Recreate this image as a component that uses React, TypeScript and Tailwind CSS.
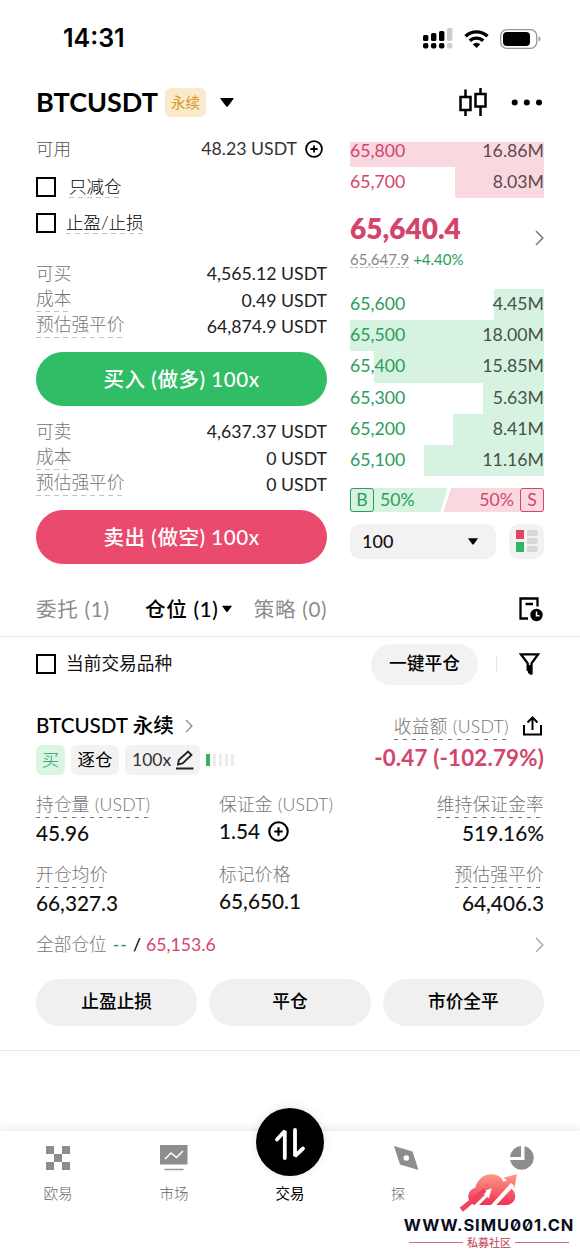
import React from "react";

type Kids = { children: React.ReactNode };

const Dash = ({ dark }: { dark?: boolean }) => (
  <span
    className={
      dark
        ? "block h-px w-full bg-[repeating-linear-gradient(90deg,#777_0_4px,transparent_4px_9px)]"
        : "block h-px w-full bg-[repeating-linear-gradient(90deg,#c4c4c4_0_5px,transparent_5px_9px)]"
    }
  />
);

const Check = () => <span className="block size-5 shrink-0 border-2 border-black" />;

const Plus = ({ size }: { size: number }) => (
  <svg width={size} height={size} viewBox="0 0 20 20" fill="none" stroke="#000" strokeWidth="2">
    <circle cx="10" cy="10" r="8.8" />
    <path d="M10 6v8M6 10h8" />
  </svg>
);

const Chevron = ({ color, className }: { color: string; className?: string }) => (
  <svg className={className} width="9" height="16" viewBox="0 0 9 16" fill="none" stroke={color} strokeWidth="1.5">
    <path d="M1 1l6.8 7L1 15" />
  </svg>
);

const Caret = ({ w, h }: { w: number; h: number }) => (
  <svg width={w} height={h} viewBox="0 0 14 9">
    <path d="M1 0h12q1.2 0 .4 1L8 8.300q-1 1-2 0L.6 1Q-.2 0 1 0z" />
  </svg>
);

const Row = ({ label, value, dashed }: { label: string; value: string; dashed?: boolean }) => (
  <div className="flex h-[26.7px] items-center justify-between">
    <div className={dashed ? "-mt-[3px] text-[17.700px] leading-[21px] font-light text-[#757575]" : "-mt-px text-[17.700px] leading-[21px] font-light text-[#757575]"}>
      {label}
      {dashed && (
        <div className="pt-[2px]">
          <Dash />
        </div>
      )}
    </div>
    <div className="-mt-px text-[17.700px] leading-5 text-[#222]">{value}</div>
  </div>
);

const bids = [
  { p: "65,600", v: "4.45M", w: 50 },
  { p: "65,500", v: "18.00M", w: 194 },
  { p: "65,400", v: "15.85M", w: 170 },
  { p: "65,300", v: "5.63M", w: 61 },
  { p: "65,200", v: "8.41M", w: 91 },
  { p: "65,100", v: "11.16M", w: 120 },
];

const Level = ({ p, v, w, side, first }: { p: string; v: string; w: number; side: "ask" | "bid"; first?: boolean }) => (
  <div className={first ? "grid h-[25px] grid-cols-1 grid-rows-1" : "grid h-[31.15px] grid-cols-1 grid-rows-1"}>
    <div
      className={side === "ask" ? "col-start-1 row-start-1 justify-self-end bg-[#fad8e0]" : "col-start-1 row-start-1 justify-self-end bg-[#d6f2e0]"}
      style={{ width: w }}
    />
    <div className={first ? "col-start-1 row-start-1 flex items-start justify-between text-[17.700px] leading-[18px]" : "col-start-1 row-start-1 flex items-center justify-between pb-px text-[17.700px]"}>
      <span className={side === "ask" ? "text-[#d3456b]" : "text-[#2c9d59]"}>{p}</span>
      <span className={side === "ask" ? "text-[#5b4a50]" : "text-[#46524b]"}>{v}</span>
    </div>
  </div>
);

const StatusBar = () => (
  <div className="flex h-[77px] items-center justify-between pr-[39px] pl-[63px]">
    <span className="font-['Inter'] text-[25px] font-semibold">14:31</span>
    <div className="flex items-center gap-[11px]">
      <svg width="30" height="21" viewBox="0 0 30 21">
        <rect x="0" y="7" width="5.400" height="6" rx="1.5" />
        <rect x="8" y="5" width="5.400" height="8" rx="1.5" />
        <rect x="16" y="3" width="5.400" height="10" rx="1.5" />
        <rect x="24" y="0" width="5.400" height="13" rx="1.5" fill="#ccc" />
        <rect x="0" y="15" width="5.400" height="5.600" rx="2" />
        <rect x="8" y="15" width="5.400" height="5.600" rx="2" />
        <rect x="16" y="15" width="5.400" height="5.600" rx="2" />
        <rect x="24" y="15" width="5.400" height="5.600" rx="2" fill="#ccc" />
      </svg>
      <svg width="25" height="19" viewBox="0 0 25 19" fill="none" stroke="#000" strokeWidth="3.400">
        <path d="M1.500 7.300a15.800 15.800 0 0 1 22 0" />
        <path d="M5.800 11.800a9.600 9.600 0 0 1 13.400 0" />
        <path d="M8.700 15.200a5.500 5.500 0 0 1 7.600 0L12.500 19z" fill="#000" stroke="none" />
      </svg>
      <svg width="41" height="20" viewBox="0 0 41 20">
        <rect x=".7" y=".7" width="36" height="18.600" rx="6" fill="none" stroke="#999" strokeWidth="1.300" />
        <rect x="3" y="3" width="27" height="14" rx="4" />
        <path d="M38.500 7.500q2 .8 2 2.500t-2 2.500z" fill="#999" />
      </svg>
    </div>
  </div>
);

const Header = () => (
  <div className="flex h-[51px] items-center pr-[37px] pl-9">
    <span className="text-[27px] font-bold">BTCUSDT</span>
    <span className="ml-[7px] flex h-[29px] w-[41px] items-center justify-center rounded-md bg-[#fbe9cb] text-[14.500px] text-[#cf9a2c]">永续</span>
    <span className="ml-[14px]">
      <Caret w={14} h={9} />
    </span>
    <svg className="ml-auto" width="28" height="29" viewBox="0 0 28 29" fill="none" stroke="#000" strokeWidth="2.500">
      <path d="M6.500 1.500v7.500M6.500 22v6M1.500 9h10v13h-10zM21.500 0v6M21.500 18.500V28M16.500 6h10v12.500h-10z" />
    </svg>
    <svg className="ml-6" width="32" height="7" viewBox="0 0 32 7">
      <circle cx="3.700" cy="3.500" r="3" />
      <circle cx="15.800" cy="3.500" r="3" />
      <circle cx="28" cy="3.500" r="3" />
    </svg>
  </div>
);

const OrderForm = () => (
  <div className="w-[291px]">
    <div className="flex h-[14px] items-center justify-between">
      <span className="text-[17.500px] leading-5 font-light text-[#555]">可用</span>
      <div className="flex items-center gap-[8px]">
        <span className="text-[17.700px] leading-5 text-[#333]">48.23 USDT</span>
        <span className="mr-1">
          <Plus size={18} />
        </span>
      </div>
    </div>
    <div className="mt-[17px] flex h-7 items-center gap-[13px]">
      <Check />
      <span className="text-[17.500px] leading-[21px] font-light">
        只减仓
        <Dash />
      </span>
    </div>
    <div className="mt-2 flex h-7 items-center gap-[10px]">
      <Check />
      <span className="text-[17.500px] leading-[21px] font-light">
        止盈/止损
        <Dash />
      </span>
    </div>
    <div className="mt-[24px]">
      <Row label="可买" value="4,565.12 USDT" />
      <Row label="成本" value="0.49 USDT" dashed />
      <Row label="预估强平价" value="64,874.9 USDT" dashed />
    </div>
    <button className="mt-[11px] block h-[54px] w-full rounded-full bg-[#31bd65] text-[20.600px] font-medium tracking-[0.500px] text-white">买入 (做多) 100x</button>
    <div className="mt-[13px]">
      <Row label="可卖" value="4,637.37 USDT" />
      <Row label="成本" value="0 USDT" dashed />
      <Row label="预估强平价" value="0 USDT" dashed />
    </div>
    <button className="mt-[11px] block h-[54px] w-full rounded-full bg-[#ea4a6d] text-[20.600px] font-medium tracking-[0.500px] text-white">卖出 (做空) 100x</button>
  </div>
);

const OrderBook = () => (
  <div className="w-[194px]">
    <Level p="65,800" v="16.86M" w={194} side="ask" first />
    <Level p="65,700" v="8.03M" w={89} side="ask" />
    <div className="flex h-[91px] items-start justify-between">
      <div className="pt-[13px]">
        <div className="text-[28px] leading-[34px] font-extrabold text-[#d3456b]">65,640.4</div>
        <div className="mt-[3px] flex h-[22px] items-center gap-1 text-[15px]">
          <span className="text-[#888] underline decoration-[#bbb] decoration-dashed decoration-1 underline-offset-2">65,647.9</span>
          <span className="text-[#2c9d59]">+4.40%</span>
        </div>
      </div>
      <Chevron color="#777" className="mt-8" />
    </div>
    {bids.map((b) => (
      <Level key={b.p} {...b} side="bid" />
    ))}
    <div className="mt-3 grid h-6 grid-cols-1 grid-rows-1">
      <svg className="col-start-1 row-start-1" width="194" height="24" viewBox="0 0 194 24">
        <path d="M0 0h97.500L90.500 24H0z" fill="#d6f2e0" />
        <path d="M101 0h93v24H93.500z" fill="#fad8e0" />
      </svg>
      <div className="col-start-1 row-start-1 flex items-center text-[17.700px]">
        <span className="flex size-6 items-center justify-center rounded-[3px] border-[1.5px] border-[#2c9d59] text-[#2c9d59]">B</span>
        <span className="ml-[6px] text-[#2c9d59]">50%</span>
        <span className="mr-[6px] ml-auto text-[#d3456b]">50%</span>
        <span className="flex size-6 items-center justify-center rounded-[3px] border-[1.5px] border-[#d3456b] text-[#d3456b]">S</span>
      </div>
    </div>
    <div className="mt-3 flex justify-between">
      <div className="flex h-[35px] w-[146px] items-center justify-between rounded-[10px] bg-[#f2f2f2] pr-[18px] pl-3 text-[18px] font-medium text-[#111]">
        100
        <Caret w={10} h={7} />
      </div>
      <div className="flex size-[35px] items-center justify-center rounded-[10px] bg-[#f2f2f2]">
        <svg width="22" height="22" viewBox="0 0 22 22">
          <path d="M0 0h8v9H0z" fill="#e04468" />
          <path d="M0 12h8v10H0z" fill="#31b563" />
          <path d="M11 0h10.500v6H11zM11 8h10.500v6H11zM11 16h10.500v6H11z" fill="#d8d8d8" />
        </svg>
      </div>
    </div>
  </div>
);

const Tabs = () => (
  <div className="flex h-[55px] items-center border-b border-[#e8e8e8] pr-9 pl-9 text-[20.600px] tracking-[0.700px] text-[#8c8c8c]">
    <span className="w-[109px]">委托 (1)</span>
    <span className="flex items-center gap-[3px] font-medium text-black">
      仓位 (1)
      <Caret w={10} h={8} />
    </span>
    <span className="ml-[22px]">策略 (0)</span>
    <svg className="ml-auto" width="27" height="25" viewBox="0 0 27 25" fill="none" stroke="#000" strokeWidth="2.300">
      <path d="M20.500 9.500V1.500H3.500v20H11M8.500 7h7.500" />
      <circle cx="19.500" cy="18" r="6.200" fill="#000" stroke="none" />
      <path d="M19.500 14.500v4.200h3" stroke="#fff" strokeWidth="1.500" />
    </svg>
  </div>
);

const Filter = () => (
  <div className="flex h-[54px] items-center pr-9 pl-9">
    <Check />
    <span className="ml-[10px] text-[17.700px] text-[#111]">当前交易品种</span>
    <button className="ml-auto h-[41px] w-[107px] rounded-full bg-[#f2f2f2] text-[17.700px] font-medium">一键平仓</button>
    <span className="ml-[18px] h-4 w-px bg-[#e5e5e5]" />
    <svg className="mr-1 ml-[22px]" width="21" height="23" viewBox="0 0 21 23" fill="none" stroke="#000" strokeWidth="2.300">
      <path d="M1.800 1.300h17.400l-6.700 9v9.200l-3.800-2.500v-6.700z" />
      <path d="M9 12h3.500v10.500L9 20z" fill="#000" stroke="none" />
    </svg>
  </div>
);

const Metric = ({ label, end, plain, children }: Kids & { label: string; end?: boolean; plain?: boolean }) => (
  <div className={end ? "flex flex-1 flex-col items-end" : "flex w-[183px] flex-col items-start"}>
    <div className="text-[17.700px] leading-[24px] font-light tracking-[0.200px] text-[#757575]">
      {label}
      {!plain && <Dash dark />}
    </div>
    <div className={plain ? "mt-[2px] flex h-6 items-center gap-2 text-[20.800px] font-medium text-[#111]" : "mt-[3px] flex h-6 items-center text-[20.800px] font-medium text-[#111]"}>
      {children}
    </div>
  </div>
);

const Position = () => (
  <div className="border-b border-[#e8e8e8] px-9 pb-[24px]">
    <div className="mt-[21px] flex h-[27px] items-center">
      <span className="text-[20.600px] font-medium">BTCUSDT 永续</span>
      <Chevron color="#888" className="ml-[11px] h-[14px] w-2" />
      <span className="mt-1 ml-auto text-[17.700px] leading-6 font-light tracking-[0.300px] text-[#757575]">
        收益额 (USDT)
        <Dash dark />
      </span>
      <svg className="mr-[2px] ml-[14px]" width="19" height="20" viewBox="0 0 19 20" fill="none" stroke="#000" strokeWidth="2">
        <path d="M1 9v9.500h17V9M9.500 14V2M4.500 6.500l5-5 5 5" />
      </svg>
    </div>
    <div className="mt-[6px] flex h-[30px] items-center">
      <span className="flex h-[30px] w-[29px] items-center justify-center rounded-md bg-[#dbf5e4] text-[17.500px] font-light text-[#2c9d59]">买</span>
      <span className="ml-[6px] flex h-[30px] w-[48px] items-center justify-center rounded-md bg-[#f2f2f2] text-[17.500px]">逐仓</span>
      <span className="ml-[6px] flex h-[30px] w-[75px] items-center justify-between rounded-md bg-[#f2f2f2] pr-[6px] pl-[7px] text-[17.500px] text-[#333]">
        100x
        <svg width="18" height="20" viewBox="0 0 18 20" fill="none" stroke="#222" strokeWidth="1.800">
          <path d="M2 14.500l.8-4.500L12 1.500 15.500 5 6.500 13.500zM0 18.500h17.500" />
        </svg>
      </span>
      <span className="ml-[6px] flex h-3 gap-[3px]">
        <span className="w-[3.500px] bg-[#31b563]" />
        <span className="w-[3px] bg-[#ececec]" />
        <span className="w-[3px] bg-[#ececec]" />
        <span className="w-[3px] bg-[#ececec]" />
        <span className="w-[3px] bg-[#ececec]" />
      </span>
      <span className="mb-1 ml-auto text-[22.300px] font-bold tracking-[0.200px] text-[#d3456b]">-0.47 (-102.79%)</span>
    </div>
    <div className="mt-[18px] flex h-[70px]">
      <Metric label="持仓量 (USDT)">45.96</Metric>
      <Metric label="保证金 (USDT)" plain>
        1.54 <Plus size={21} />
      </Metric>
      <Metric label="维持保证金率" end>519.16%</Metric>
    </div>
    <div className="flex h-[65px]">
      <Metric label="开仓均价">66,327.3</Metric>
      <Metric label="标记价格" plain>65,650.1</Metric>
      <Metric label="预估强平价" end>64,406.3</Metric>
    </div>
    <div className="flex h-[34px] items-center text-[17.700px]">
      <span className="font-light text-[#757575]">全部仓位</span>
      <span className="ml-[6px] font-medium tracking-[1px] text-[#2c9d59]">--</span>
      <span className="mx-[5px] font-medium">/</span>
      <span className="text-[#d3456b]">65,153.6</span>
      <Chevron color="#aaa" className="ml-auto" />
    </div>
    <div className="mt-[17px] grid grid-cols-3 gap-3 text-[17.700px] font-medium">
      <button className="h-[47px] rounded-full bg-[#f0f0f0]">止盈止损</button>
      <button className="h-[47px] rounded-full bg-[#f0f0f0]">平仓</button>
      <button className="h-[47px] rounded-full bg-[#f0f0f0]">市价全平</button>
    </div>
  </div>
);

const NavItem = ({ label, shifted, children }: Kids & { label: string; shifted?: boolean }) => (
  <div className="flex w-[116px] flex-col items-center pt-px">
    <div className="flex h-[52px] items-center">{children}</div>
    <span className={shifted ? "mr-4 text-[14px] leading-5 font-light text-[#666]" : "text-[14.500px] leading-5 font-light text-[#666]"}>{label}</span>
  </div>
);

const BottomNav = () => (
  <div className="mt-auto flex h-[124px] shadow-[0_-3px_8px_rgba(0,0,0,0.08)]">
    <NavItem label="欧易">
      <svg width="24" height="24" viewBox="0 0 24 24" fill="#8d8d8d">
        <path d="M0 0h8v8H0zM16 0h8v8h-8zM8 8h8v8H8zM0 16h8v8H0zM16 16h8v8h-8z" />
      </svg>
    </NavItem>
    <NavItem label="市场">
      <svg width="28" height="26" viewBox="0 0 28 26" fill="none">
        <path d="M0 0h27.500v19.500H0z" fill="#8d8d8d" />
        <path d="M5 14l6-6 5.500 4.500L23 6" stroke="#fff" strokeWidth="1.600" />
        <path d="M4.500 24.500h19" stroke="#999" strokeWidth="1.500" />
      </svg>
    </NavItem>
    <div className="flex w-[116px] flex-col items-center">
      <div className="-mt-[23px] flex size-[68px] items-center justify-center rounded-full bg-black shadow-[0_-1px_10px_rgba(0,0,0,0.1)]">
        <svg className="mt-1" width="32" height="34" viewBox="0 0 32 34" fill="none" stroke="#fff" strokeWidth="3.800" strokeLinecap="round" strokeLinejoin="bevel">
          <path d="M3 12.500L10.800 4V31M21 3v26L29 21.500" />
        </svg>
      </div>
      <span className="mt-[8px] text-[14.500px] leading-5 text-black">交易</span>
    </div>
    <NavItem label="探" shifted>
      <svg width="25" height="24" viewBox="0 0 25 24">
        <path fillRule="evenodd" d="M0 0l18.500 5.500L24.500 24 6 18.500zM12.300 9.200a2.800 2.800 0 1 0 0 5.600 2.800 2.800 0 0 0 0-5.600z" fill="#8d8d8d" />
      </svg>
    </NavItem>
    <NavItem label="">
      <svg width="24" height="24" viewBox="0 0 24 24" fill="#8d8d8d">
        <path d="M11 0v11H0A12 12 0 0 1 11 0z" />
        <path d="M14.500 0A12 12 0 1 1 0 14h14.500z" />
      </svg>
    </NavItem>
  </div>
);

const Watermark = () => (
  <div className="absolute top-[1173px] left-[403px] flex w-[172px] flex-col items-center">
    <svg width="60" height="40" viewBox="0 0 180 120">
      <defs>
        <linearGradient id="cloud" x1="0" y1="0" x2="0" y2="1">
          <stop offset="0" stopColor="#fd9a84" />
          <stop offset="1" stopColor="#f03158" />
        </linearGradient>
      </defs>
      <path
        d="M50 96C22 92 20 52 48 45C56 18 76 2 100 4C118 5 128 14 133 26L144 22L134 14L174 4L166 44L158 36L154 44C178 60 172 94 142 96z"
        fill="url(#cloud)"
      />
      <path d="M44 98L78 66L70 56L98 46L90 76L84 72L58 98zM94 98L156 30L166 38L110 98z" fill="#fff" />
      <path d="M2 104L74 46L82 56L12 116z" fill="#f2415f" />
    </svg>
    <div className="mt-[3px] font-['Inter'] text-[16.500px] leading-[18px] font-bold tracking-[0.900px] whitespace-nowrap text-[#0a0d20] slashed-zero">WWW.SIMU001.CN</div>
    <div className="flex w-[160px] items-center gap-[4px] text-[11px] leading-[17px] font-medium text-[#c65a6c]">
      <span className="h-px flex-1 bg-[#cf6e7d]" />
      私募社区
      <span className="h-px flex-1 bg-[#cf6e7d]" />
    </div>
  </div>
);

export default function App() {
  return (
    <div className="relative flex h-[1255px] w-[580px] flex-col overflow-hidden bg-white font-['Lato','Noto_Sans_CJK_SC',sans-serif] text-black">
      <StatusBar />
      <Header />
      <div className="mt-[14px] flex h-[440px] gap-[23px] pl-9 leading-5 whitespace-nowrap [&>*]:shrink-0">
        <OrderForm />
        <OrderBook />
      </div>
      <Tabs />
      <Filter />
      <Position />
      <BottomNav />
      <Watermark />
    </div>
  );
}
